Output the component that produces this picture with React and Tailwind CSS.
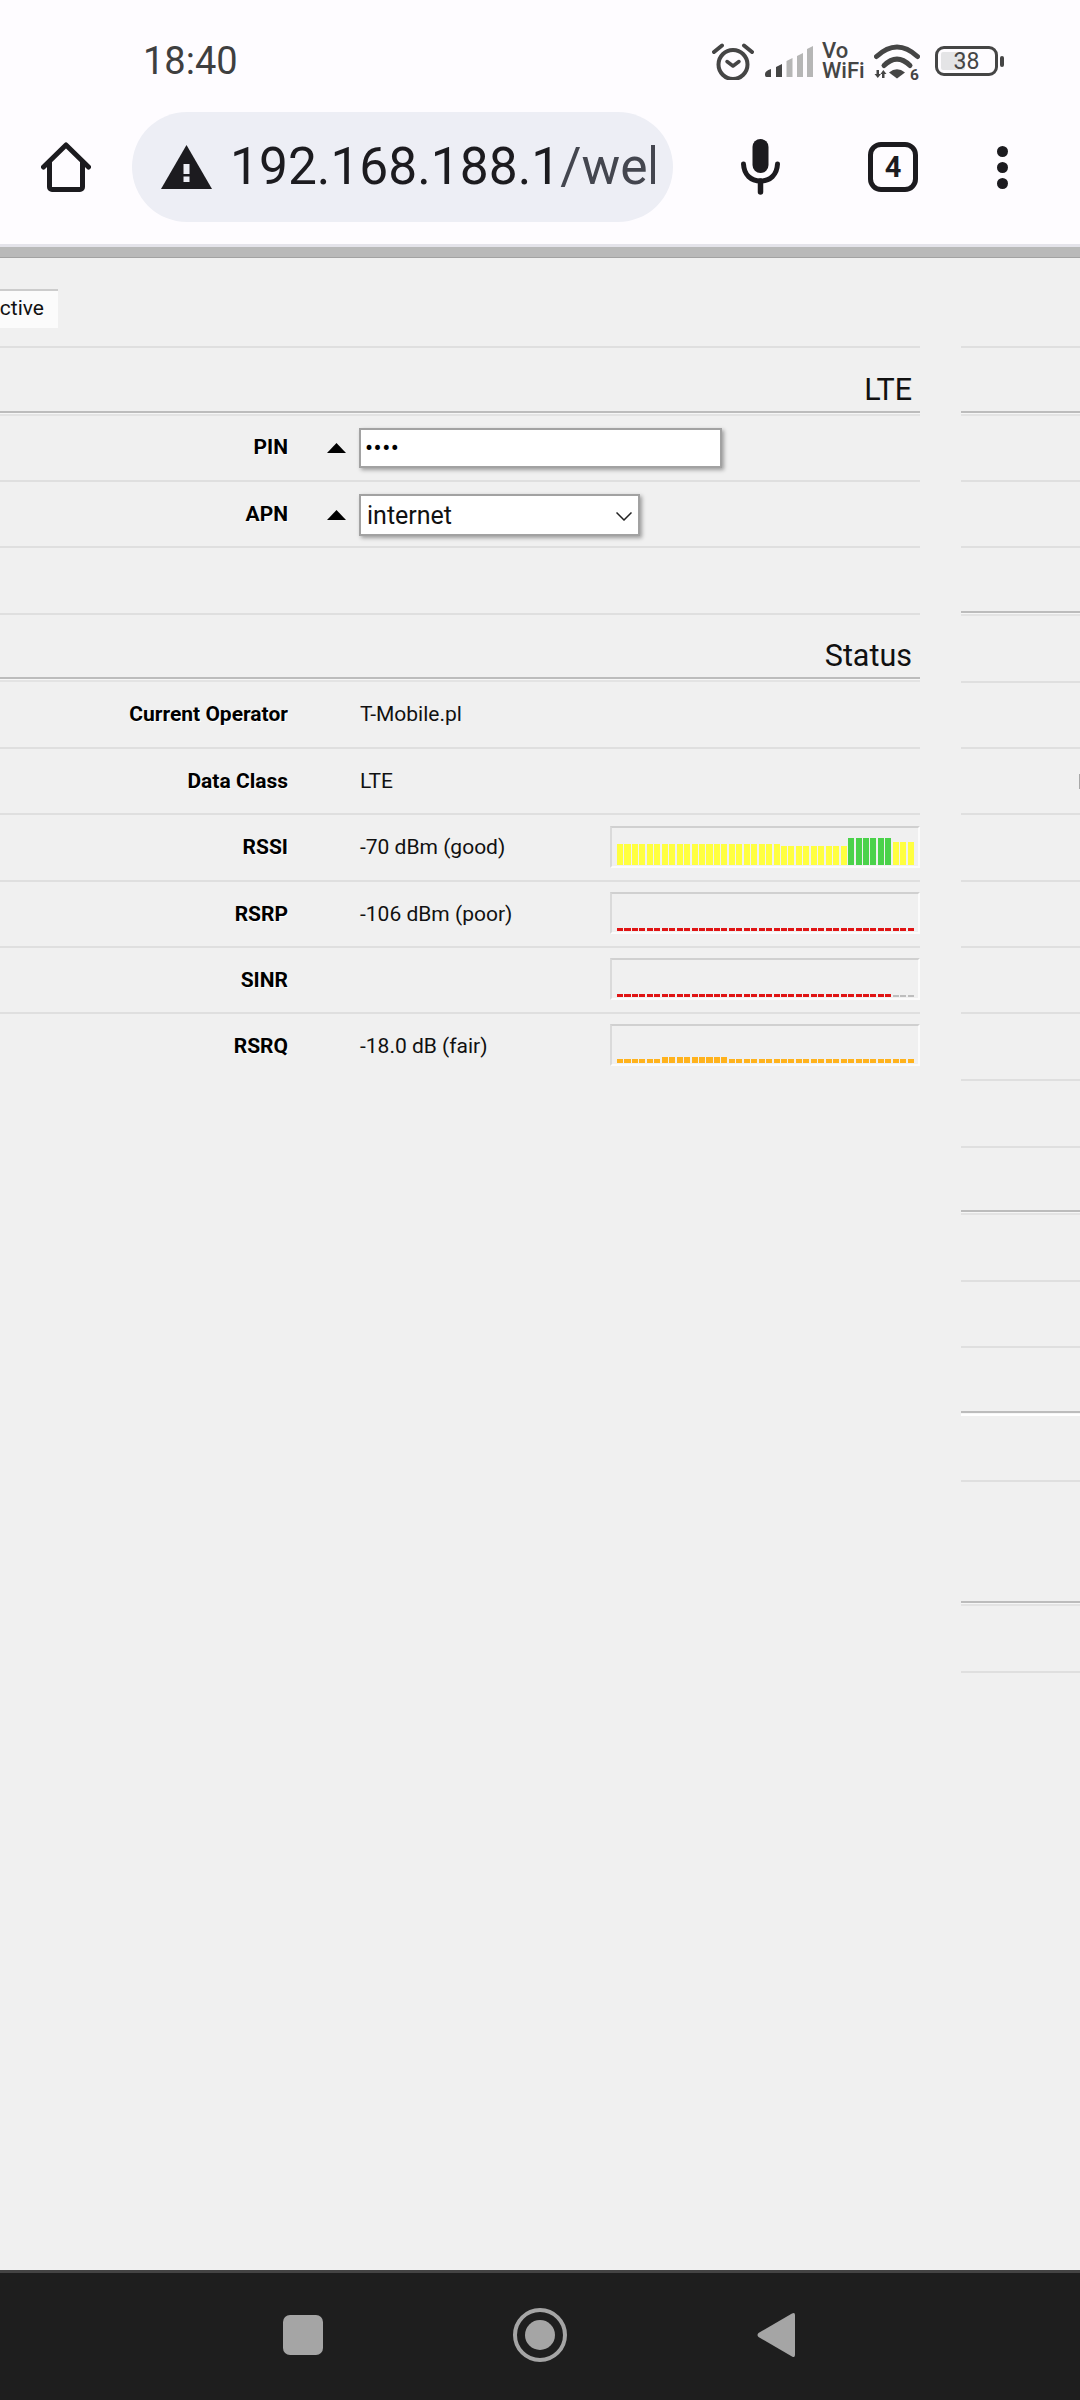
import React from "react";

const Line = () => <div className="h-[2px] bg-[#dfdfdf]" />;
const Dbl = ({ white }) => (
  <div className="flex flex-col">
    <div className="h-[2px] bg-[#bcbcbc]" />
    <div className="h-[1px] bg-[#f6f6f6]" />
    <div className={white ? "h-[2px] bg-[#ffffff]" : "h-[2px] bg-[#e3e3e3]"} />
  </div>
);

const Label = ({ children }) => (
  <div className="w-[288px] shrink-0 text-right text-[21px] font-bold text-black [text-shadow:1px_1px_0_#ffffff]">{children}</div>
);

const Value = ({ children }) => (
  <div className="ml-[72px] w-[250px] shrink-0 whitespace-nowrap text-[21px] text-[#111111]">{children}</div>
);

const Tri = () => (
  <svg width="19" height="10" viewBox="0 0 19 10" className="ml-[39px] shrink-0">
    <path d="M9.5 0 L19 10 H0 Z" fill="#000000" />
  </svg>
);

const Spark = ({ segs, top }) => {
  const bars = [];
  segs.forEach((s, i) => {
    for (let k = 0; k < s.n; k++) bars.push(<div key={i + "-" + k} className={"flex-1 blur-[0.4px] " + s.c} />);
  });
  return (
    <div className={"box-border flex h-[42px] w-[310px] shrink-0 items-end gap-[1.4px] self-start border-2 border-t-[#d0d0d0] border-l-[#dadada] border-r-[#fbfbfb] border-b-[#fbfbfb] pb-[1px] pl-[5px] pr-[4px] " + top}>
      {bars}
    </div>
  );
};

const Y = "bg-[#ffff40]";
const rssi = [
  { n: 22, c: "h-[21px] " + Y },
  { n: 9, c: "h-[19px] " + Y },
  { n: 6, c: "h-[27px] bg-[#4ad24a]" },
  { n: 3, c: "h-[23px] " + Y },
];
const rsrp = [{ n: 40, c: "h-[3px] bg-[#e01414]" }];
const sinr = [
  { n: 37, c: "h-[3px] bg-[#e01414]" },
  { n: 3, c: "h-[2px] bg-[#bdbdbd]" },
];
const rsrq = [
  { n: 6, c: "h-[4px] bg-[#ffb21c]" },
  { n: 9, c: "h-[6px] bg-[#ffb21c]" },
  { n: 25, c: "h-[4px] bg-[#ffb21c]" },
];

const Signal = () => (
  <svg width="48" height="31" viewBox="0 0 48 31" className="shrink-0">
    <path d="M0 28 Q0 25 6 23 V31 H1.5 Q0 31 0 29 Z" fill="#454545" />
    <path d="M11 21 L17 18 V31 H11 Z" fill="#454545" />
    <path d="M21.5 15 L27.5 12 V31 H21.5 Z" fill="#b6b6b6" />
    <path d="M32 10 L38 7 V31 H32 Z" fill="#b6b6b6" />
    <path d="M42 3 L48 0 V31 H42 Z" fill="#b6b6b6" />
  </svg>
);

const Alarm = () => (
  <svg width="42" height="37" viewBox="0 0 42 37" fill="none" stroke="#454545" className="shrink-0">
    <circle cx="21" cy="21.5" r="14.5" strokeWidth="4" />
    <path d="M15 18.5 L21 23 L27 18.5" strokeWidth="3.5" strokeLinecap="round" strokeLinejoin="round" />
    <path d="M2 9 L10 2.5 M32 2.5 L40 9" strokeWidth="4" strokeLinecap="round" />
  </svg>
);

const Wifi = () => (
  <svg width="46" height="37" viewBox="0 0 46 37" fill="none" className="shrink-0">
    <path d="M2.5 13.5 Q23 -5.5 43.5 13.5" stroke="#454545" strokeWidth="5" strokeLinecap="round" />
    <path d="M10 22.5 Q23 9.5 36 22.5" stroke="#454545" strokeWidth="5" strokeLinecap="round" />
    <path d="M15 29.5 Q23 23 31 29.5 L23 35.5 Z" fill="#454545" />
    <path d="M2.5 27 H5 V31 H7 L3.8 35 L0.5 31 H2.5 Z M8 35 H10.5 V31 H12.5 L9.3 27 L6.5 31 H8 Z" fill="#454545" />
    <text x="36" y="37" fontFamily="Roboto" fontWeight="700" fontSize="15.5" fill="#454545">6</text>
  </svg>
);

const Battery = () => (
  <div className="ml-[15px] flex shrink-0 items-center">
    <div className="relative box-border flex h-[30px] w-[63px] items-center justify-center rounded-[9px] border-[3px] border-[#454545] text-[23px] leading-none text-[#454545]">
      <div className="absolute bottom-[3px] left-[3px] top-[3px] w-[24px] rounded-[2px] bg-[#e4e4e6]" />
      <span className="relative">38</span>
    </div>
    <div className="ml-[2px] h-[11px] w-[4px] rounded-[2px] bg-[#454545]" />
  </div>
);

const Home = () => (
  <svg width="50" height="50" viewBox="0 0 50 50" fill="none" stroke="#1c1b1f" strokeWidth="5" strokeLinecap="round" strokeLinejoin="round" className="shrink-0">
    <path d="M2.5 25 L25 3 L47.5 25" />
    <path d="M8.5 20 V45 a2.5 2.5 0 0 0 2.5 2.5 H39 a2.5 2.5 0 0 0 2.5 -2.5 V20" />
  </svg>
);

const Warn = () => (
  <svg width="51" height="44" viewBox="0 0 51 44" className="shrink-0">
    <path d="M25.5 0 L51 44 H0 Z" fill="#1c1b1f" />
    <rect x="22.5" y="19" width="6" height="10" fill="#edeef5" />
    <rect x="22.5" y="31.5" width="6" height="5.5" fill="#edeef5" />
  </svg>
);

const Mic = () => (
  <svg width="39" height="56" viewBox="0 0 39 56" fill="none" className="ml-[68px] shrink-0">
    <rect x="11.5" y="0" width="16" height="34" rx="8" fill="#1c1b1f" />
    <path d="M2.5 25 C3 36 10 42 19.5 42 C29 42 36 36 36.5 25" stroke="#1c1b1f" strokeWidth="5" strokeLinecap="round" />
    <path d="M19.5 42 V53" stroke="#1c1b1f" strokeWidth="5.5" strokeLinecap="round" />
  </svg>
);

const Chevron = () => (
  <svg width="16" height="9" viewBox="0 0 16 9" fill="none" stroke="#222222" strokeWidth="1.5" className="shrink-0">
    <path d="M0.5 0.5 L8 8 L15.5 0.5" />
  </svg>
);

const LeftCol = () => (
  <div className="w-[920px] shrink-0 overflow-hidden">
    <div className="flex h-[88px] items-start pt-[31px]">
      <div className="box-border flex h-[39px] w-[58px] items-center justify-end overflow-hidden whitespace-nowrap border-t-2 border-[#cccccc] bg-[#fbfbfb] pb-[2px] pr-[14px] text-[21px] text-[#111111]">ctive</div>
    </div>
    <Line />
    <div className="flex h-[63px] items-end justify-end pb-[1px] pr-[8px] text-[30.5px] leading-[40px] text-[#111111]">LTE</div>
    <Dbl />
    <div className="flex h-[64px] items-center">
      <Label>PIN</Label>
      <Tri />
      <div className="ml-[13px] box-border flex h-[40px] w-[363px] items-center border-2 border-[#a2a2a2] bg-white pl-[4px] text-[24px] tracking-[0.5px] text-black shadow-[2px_2px_4px_rgba(0,0,0,0.35)]">••••</div>
    </div>
    <Line />
    <div className="flex h-[64px] items-center pt-[2px]">
      <Label>APN</Label>
      <Tri />
      <div className="ml-[13px] box-border flex h-[42px] w-[281px] items-center justify-between border-2 border-[#a2a2a2] bg-white pl-[6px] pr-[6px] pt-[2px] text-[25px] text-[#111111] shadow-[2px_2px_4px_rgba(0,0,0,0.35)]">
        <span>internet</span>
        <Chevron />
      </div>
    </div>
    <Line />
    <div className="h-[65px]" />
    <Line />
    <div className="flex h-[62px] items-end justify-end pb-[1px] pr-[8px] text-[30.5px] leading-[40px] text-[#111111]">Status</div>
    <Dbl />
    <div className="flex h-[65px] items-center">
      <Label>Current Operator</Label>
      <Value>T-Mobile.pl</Value>
    </div>
    <Line />
    <div className="flex h-[64px] items-center pt-[2px]">
      <Label>Data Class</Label>
      <Value>LTE</Value>
    </div>
    <Line />
    <div className="flex h-[65px] items-center">
      <Label>RSSI</Label>
      <Value>-70 dBm (good)</Value>
      <Spark segs={rssi} top="mt-[11px]" />
    </div>
    <Line />
    <div className="flex h-[64px] items-center pt-[2px]">
      <Label>RSRP</Label>
      <Value>-106 dBm (poor)</Value>
      <Spark segs={rsrp} top="mt-[8px]" />
    </div>
    <Line />
    <div className="flex h-[64px] items-center pt-[2px]">
      <Label>SINR</Label>
      <Value />
      <Spark segs={sinr} top="mt-[8px]" />
    </div>
    <Line />
    <div className="flex h-[64px] items-center pt-[2px]">
      <Label>RSRQ</Label>
      <Value>-18.0 dB (fair)</Value>
      <Spark segs={rsrq} top="mt-[8px]" />
    </div>
  </div>
);

const RightCol = () => (
  <div className="ml-[41px] flex-1">
    <div className="h-[88px]" />
    <Line />
    <div className="h-[63px]" />
    <Dbl />
    <div className="h-[64px]" />
    <Line />
    <div className="h-[64px]" />
    <Line />
    <div className="h-[63px]" />
    <Dbl />
    <div className="h-[65px]" />
    <Line />
    <div className="h-[64px]" />
    <Line />
    <div className="flex h-[64px] items-center justify-end">
      <div className="h-[15px] w-[1px] bg-[#a8a8a8]" />
    </div>
    <Line />
    <div className="h-[65px]" />
    <Line />
    <div className="h-[64px]" />
    <Line />
    <div className="h-[64px]" />
    <Line />
    <div className="h-[65px]" />
    <Line />
    <div className="h-[65px]" />
    <Line />
    <div className="h-[62px]" />
    <Dbl />
    <div className="h-[65px]" />
    <Line />
    <div className="h-[64px]" />
    <Line />
    <div className="h-[63px]" />
    <Dbl white />
    <div className="h-[64px]" />
    <Line />
    <div className="h-[119px]" />
    <Dbl />
    <div className="h-[65px]" />
    <Line />
  </div>
);

export default function App() {
  return (
    <div className="flex h-[2400px] w-[1080px] flex-col overflow-hidden bg-[#f0f0f0] font-['Roboto',sans-serif]">
      <header className="bg-[#fefcff]">
        <div className="flex h-[112px] items-start pl-[143px] pr-[76px] pt-[41px]">
          <div className="text-[38px] leading-[41px] text-[#3f3f3f]">18:40</div>
          <div className="ml-auto flex items-center">
            <Alarm />
            <div className="ml-[11px]"><Signal /></div>
            <div className="ml-[9px] flex w-[42px] flex-col whitespace-nowrap text-[22px] font-medium leading-[20px] text-[#454545]">
              <span>Vo</span>
              <span>WiFi</span>
            </div>
            <div className="ml-[10px]"><Wifi /></div>
            <Battery />
          </div>
        </div>
        <div className="flex h-[110px] items-center pl-[41px]">
          <Home />
          <div className="ml-[41px] flex h-[110px] w-[541px] items-center rounded-[55px] bg-[#edeef5] pl-[29px]">
            <Warn />
            <div className="ml-[18px] w-[425px] overflow-hidden whitespace-nowrap text-[51.5px] leading-[60px] text-[#1c1b1f]">
              192.168.188.1<span className="text-[#44464f]">/web</span>
            </div>
          </div>
          <Mic />
          <div className="ml-[88px] box-border flex h-[50px] w-[50px] shrink-0 items-center justify-center rounded-[13px] border-[5px] border-[#1c1b1f] text-[29px] font-bold leading-none text-[#1c1b1f]">4</div>
          <div className="ml-[79px] flex flex-col gap-[5px]">
            <div className="h-[11px] w-[11px] rounded-full bg-[#1c1b1f]" />
            <div className="h-[11px] w-[11px] rounded-full bg-[#1c1b1f]" />
            <div className="h-[11px] w-[11px] rounded-full bg-[#1c1b1f]" />
          </div>
        </div>
        <div className="h-[22px]" />
        <div className="h-[3px] bg-[#e4e3ea]" />
        <div className="h-[10px] bg-[#b9b9b9]" />
        <div className="h-[1px] bg-[#a2a2a2]" />
      </header>
      <main className="flex flex-1 overflow-hidden">
        <LeftCol />
        <RightCol />
      </main>
      <nav className="flex h-[130px] shrink-0 flex-col bg-[#1e1e1e]">
        <div className="h-[3px] bg-[#444444]" />
        <div className="flex flex-1 items-center pb-[3px] pl-[283px]">
          <div className="h-[40px] w-[40px] rounded-[7px] bg-[#a5a5a5]" />
          <div className="ml-[190px] flex h-[54px] w-[54px] items-center justify-center rounded-full border-[4px] border-[#a5a5a5]">
            <div className="h-[30px] w-[30px] rounded-full bg-[#a5a5a5]" />
          </div>
          <svg width="38" height="46" viewBox="0 0 38 46" className="ml-[190px]">
            <path d="M35 1.5 Q38 0 38 3 V43 Q38 46 35 44.5 L1.5 25 Q-0.5 23 1.5 21 Z" fill="#a5a5a5" />
          </svg>
        </div>
      </nav>
    </div>
  );
}
